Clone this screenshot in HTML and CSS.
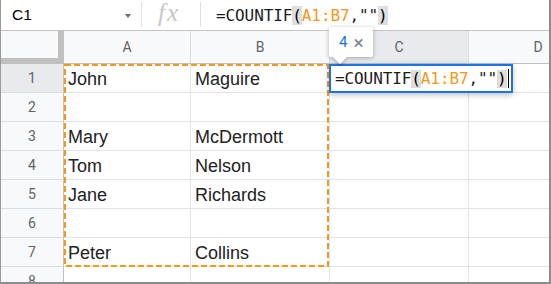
FILE: index.html
```html
<!DOCTYPE html>
<html>
<head>
<meta charset="utf-8">
<link rel="stylesheet" href="styles.css">
</head>
<body>
<div class="sheet">
  <div class="toolbar">
    <div class="namebox"><span class="ref">C1</span><span class="dd"></span></div>
    <div class="sep"></div>
    <div class="fx"><span>fx</span></div>
    <div class="sep"></div>
    <div class="formula"><span class="fn">=COUNTIF</span><span class="par">(</span><span class="rng">A1:B7</span><span class="fn">,""</span><span class="par">)</span></div>
  </div>
  <div class="grid">
    <div class="corner"></div>
    <div class="colh">A</div>
    <div class="colh">B</div>
    <div class="colh sel">C</div>
    <div class="colh">D</div>

    <div class="rowh sel">1</div><div class="cell">John</div><div class="cell">Maguire</div><div class="cell"></div><div class="cell"></div>
    <div class="rowh">2</div><div class="cell"></div><div class="cell"></div><div class="cell"></div><div class="cell"></div>
    <div class="rowh">3</div><div class="cell">Mary</div><div class="cell">McDermott</div><div class="cell"></div><div class="cell"></div>
    <div class="rowh">4</div><div class="cell">Tom</div><div class="cell">Nelson</div><div class="cell"></div><div class="cell"></div>
    <div class="rowh">5</div><div class="cell">Jane</div><div class="cell">Richards</div><div class="cell"></div><div class="cell"></div>
    <div class="rowh">6</div><div class="cell"></div><div class="cell"></div><div class="cell"></div><div class="cell"></div>
    <div class="rowh">7</div><div class="cell">Peter</div><div class="cell">Collins</div><div class="cell"></div><div class="cell"></div>
    <div class="rowh">8</div><div class="cell"></div><div class="cell"></div><div class="cell"></div><div class="cell"></div>

    <svg class="range" width="265" height="203" viewBox="0 0 265 203">
      <rect x="1" y="1" width="263" height="201" fill="none" stroke="#f7981d" stroke-width="2" stroke-dasharray="6 3"/>
    </svg>

    <div class="editor"><span class="fn">=COUNTIF</span><span class="par">(</span><span class="rng">A1:B7</span><span class="fn">,""</span><span class="par">)</span><span class="cursor"></span></div>

    <div class="tip"><span class="count">4</span><span class="close">×</span></div>
  </div>
</div>
</body>
</html>
```

FILE: styles.css
```css
* { box-sizing: border-box; }
html, body { margin: 0; padding: 0; background: #fff; }

.sheet {
  width: 551px;
  height: 284px;
  overflow: hidden;
  background: #fff;
  border-left: 1px solid #9a9a9a;
  border-right: 2px solid #8c8c8c;
  border-bottom: 2px solid #8c8c8c;
  font-family: Roboto, "Liberation Sans", Arial, sans-serif;
}

.toolbar {
  height: 31px;
  display: flex;
  align-items: center;
  border-bottom: 1px solid #c4c4c4;
  position: relative;
  z-index: 1;
}

.namebox {
  width: 140px;
  height: 30px;
  display: flex;
  align-items: center;
  padding-left: 11px;
  position: relative;
}
.namebox .ref {
  font-family: "Liberation Sans", Arial, sans-serif;
  font-size: 15.5px;
  color: #000;
  flex: 1;
}
.namebox .dd {
  width: 0; height: 0;
  border-left: 3.5px solid transparent;
  border-right: 3.5px solid transparent;
  border-top: 4px solid #6b6b6b;
  margin-right: 10px;
  margin-top: 1px;
}

.sep {
  width: 1px;
  height: 25px;
  background: #e0e0e0;
  align-self: flex-start;
  margin-top: 2px;
}

.fx {
  width: 58px;
  align-self: flex-start;
  padding-left: 16px;
  font-family: "Liberation Serif", "Times New Roman", serif;
  font-style: italic;
  font-size: 25px;
  letter-spacing: 2px;
  color: #c6c6c6;
  line-height: 26px;
}
.fx span { padding-right: 3px; }

.formula {
  padding-left: 15px;
  font-family: "DejaVu Sans Mono", monospace;
  font-size: 16px;
  letter-spacing: -0.1px;
  color: #000;
  white-space: nowrap;
  line-height: 19px;
  margin-top: 1px;
}

.fn { color: #1b1b1b; }
.rng { color: #f7981d; }
.par { background: #dedede; }

.grid {
  position: relative;
  display: grid;
  grid-template-columns: 63px 127px 139px 139px 139px;
  grid-template-rows: 33px repeat(8, 29px);
}

.corner {
  background: #f8f9fa;
  border-right: 6px solid #c0c0c0;
  border-bottom: 6px solid #c0c0c0;
}

.colh {
  background: #f8f9fa;
  border-right: 1px solid #dadce0;
  border-bottom: 1px solid #c0c0c0;
  display: flex;
  align-items: center;
  justify-content: center;
  font-size: 14px;
  color: #5f6368;
}
.colh.sel, .rowh.sel { background: #e8eaed; }

.rowh {
  background: #f8f9fa;
  border-right: 1px solid #c0c0c0;
  border-bottom: 1px solid #dadce0;
  display: flex;
  align-items: center;
  justify-content: center;
  font-size: 14px;
  color: #5f6368;
}

.cell {
  border-right: 1px solid #e2e3e3;
  border-bottom: 1px solid #e2e3e3;
  display: flex;
  align-items: flex-end;
  padding: 0 0 3px 4px;
  font-family: "Liberation Sans", Arial, sans-serif;
  font-size: 18px;
  line-height: 20px;
  color: #222;
  white-space: nowrap;
}

.range {
  position: absolute;
  left: 63px;
  top: 33px;
  pointer-events: none;
}

.editor {
  position: absolute;
  left: 328px;
  top: 33px;
  width: 184px;
  height: 29px;
  background: #fff;
  border: 2px solid #1a73e8;
  box-shadow: 0 2px 6px rgba(0,0,0,0.25);
  padding-left: 4px;
  display: flex;
  align-items: center;
  font-family: "DejaVu Sans Mono", monospace;
  font-size: 16px;
  letter-spacing: -0.1px;
  line-height: 18px;
  white-space: nowrap;
}
.cursor {
  display: inline-block;
  width: 1px;
  height: 19px;
  background: #000;
  margin-left: 1px;
}

.tip {
  position: absolute;
  left: 328px;
  top: -4px;
  width: 44px;
  height: 30px;
  background: #fff;
  border-radius: 2px;
  box-shadow: 0 1px 4px rgba(0,0,0,0.3);
  display: flex;
  align-items: center;
  padding-left: 10px;
  z-index: 3;
}
.tip::after {
  content: "";
  position: absolute;
  left: 6px;
  bottom: -5px;
  width: 10px;
  height: 10px;
  background: #fff;
  transform: rotate(45deg);
  box-shadow: 2px 2px 2px rgba(0,0,0,0.15);
}
.count {
  font-size: 15px;
  color: #1a73e8;
  margin-right: 6px;
}
.close {
  font-size: 19px;
  color: #80868b;
  line-height: 1;
}
```
